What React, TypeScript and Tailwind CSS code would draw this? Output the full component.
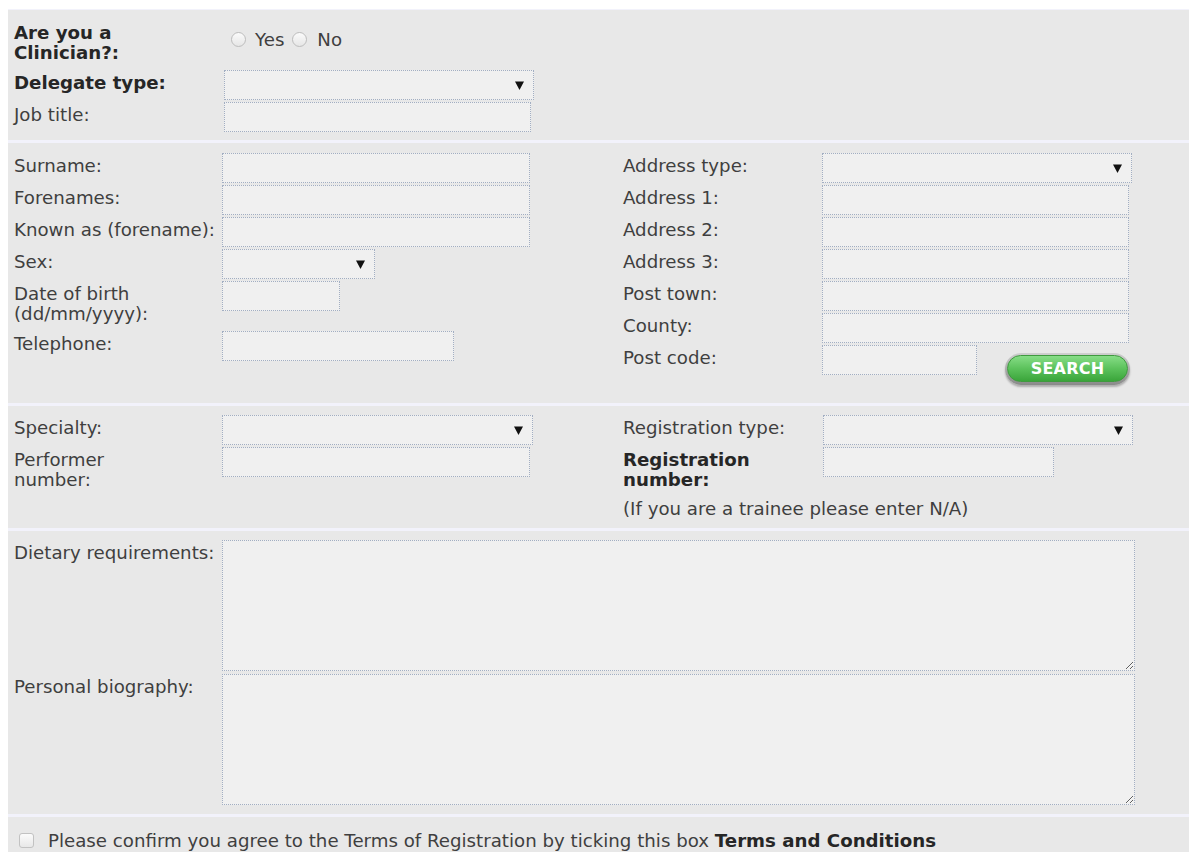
import React from 'react';

// shared look for the dotted form controls
const fieldBase =
  'h-[30px] bg-[#f0f0f0] border border-dotted border-[#a2aec2] outline-none px-1 text-[#333]';

function FieldLabel({
  children,
  bold,
  className = 'pt-[3px] pb-[5px]',
}: {
  children: React.ReactNode;
  bold?: boolean;
  className?: string;
}) {
  return (
    <div
      className={`leading-[20px] ${className} ${
        bold ? 'font-bold text-[#262626]' : 'text-[#3f3f3f]'
      }`}
    >
      {children}
    </div>
  );
}

function TextBox({ width }: { width: string }) {
  return <input type="text" className={`${fieldBase} ${width}`} />;
}

function DropDown({ width }: { width: string }) {
  return (
    <div className={`relative ${width}`}>
      <select className={`${fieldBase} w-full appearance-none`}>
        <option></option>
      </select>
      <svg
        className="pointer-events-none absolute right-[10px] top-[11px]"
        width="9"
        height="9"
        viewBox="0 0 9 9"
      >
        <path d="M0 0.5h9L4.5 9z" fill="#111" />
      </svg>
    </div>
  );
}

function RadioDot() {
  return (
    <span className="inline-block h-[15px] w-[15px] shrink-0 rounded-full border border-[#bdbdbd] bg-linear-to-b from-[#fbfbfb] to-[#e6e6e6]" />
  );
}

function SearchButton() {
  return (
    <button
      type="button"
      className="ml-[28px] mt-[8px] rounded-full bg-linear-to-b from-[#cfcfcf] to-[#8a8a8a] p-[2px] pb-[3px] shadow-[0_2px_2px_rgba(0,0,0,0.25)]"
    >
      <span className="flex h-[27px] w-[121px] items-center justify-center rounded-full border border-[#3f9a3f] bg-linear-to-b from-[#86dd86] via-[#5cc25c] to-[#3aa53a] text-[16px] font-bold tracking-[0.2px] text-white">
        SEARCH
      </span>
    </button>
  );
}

export default function App() {
  return (
    <div className="min-h-screen bg-white font-['DejaVu_Sans',sans-serif] text-[18.2px]">
      <div className="ml-[8px] mt-[9px] flex flex-col gap-[3px] bg-[#f2f2fb] pt-[1px]">
        {/* --- Clinician / delegate --- */}
        <section className="bg-[#e8e8e8] pb-[8px] pl-[6px] pt-[10px]">
          <div className="grid grid-cols-[210px_1fr] items-start gap-y-[2px]">
            <FieldLabel bold>
              Are you a
              <br />
              Clinician?:
            </FieldLabel>
            <div className="flex items-start pt-[7px] text-[#3f3f3f]">
              <span className="ml-[7px]">
                <RadioDot />
              </span>
              <span className="ml-[9px] mt-[3px] leading-[20px]">Yes</span>
              <span className="ml-[8px]">
                <RadioDot />
              </span>
              <span className="ml-[10px] mt-[3px] leading-[20px]">No</span>
            </div>
            <FieldLabel bold className="pt-[3px] pb-[1px]">
              Delegate type:
            </FieldLabel>
            <DropDown width="w-[310px]" />
            <FieldLabel>Job title:</FieldLabel>
            <TextBox width="w-[307px]" />
          </div>
        </section>

        {/* --- Name and address --- */}
        <section className="flex bg-[#e8e8e8] pb-[18px] pl-[6px] pt-[10px]">
          <div className="grid w-[609px] grid-cols-[208px_1fr] content-start items-start gap-y-[2px]">
            <FieldLabel>Surname:</FieldLabel>
            <TextBox width="w-[308px]" />
            <FieldLabel>Forenames:</FieldLabel>
            <TextBox width="w-[308px]" />
            <FieldLabel>Known as (forename):</FieldLabel>
            <TextBox width="w-[308px]" />
            <FieldLabel>Sex:</FieldLabel>
            <DropDown width="w-[153px]" />
            <FieldLabel>
              Date of birth
              <br />
              (dd/mm/yyyy):
            </FieldLabel>
            <TextBox width="w-[118px]" />
            <FieldLabel>Telephone:</FieldLabel>
            <TextBox width="w-[232px]" />
          </div>
          <div className="grid grid-cols-[199px_1fr] content-start items-start gap-y-[2px]">
            <FieldLabel>Address type:</FieldLabel>
            <DropDown width="w-[310px]" />
            <FieldLabel>Address 1:</FieldLabel>
            <TextBox width="w-[307px]" />
            <FieldLabel>Address 2:</FieldLabel>
            <TextBox width="w-[307px]" />
            <FieldLabel>Address 3:</FieldLabel>
            <TextBox width="w-[307px]" />
            <FieldLabel>Post town:</FieldLabel>
            <TextBox width="w-[307px]" />
            <FieldLabel>County:</FieldLabel>
            <TextBox width="w-[307px]" />
            <FieldLabel>Post code:</FieldLabel>
            <div className="flex items-start">
              <TextBox width="w-[155px]" />
              <SearchButton />
            </div>
          </div>
        </section>

        {/* --- Professional details --- */}
        <section className="flex bg-[#e8e8e8] pb-[9px] pl-[6px] pt-[9px]">
          <div className="grid w-[609px] grid-cols-[208px_1fr] content-start items-start gap-y-[2px]">
            <FieldLabel>Specialty:</FieldLabel>
            <DropDown width="w-[311px]" />
            <FieldLabel>
              Performer
              <br />
              number:
            </FieldLabel>
            <TextBox width="w-[308px]" />
          </div>
          <div className="grid grid-cols-[200px_1fr] content-start items-start gap-y-[2px]">
            <FieldLabel>Registration type:</FieldLabel>
            <DropDown width="w-[310px]" />
            <FieldLabel bold>
              Registration
              <br />
              number:
            </FieldLabel>
            <TextBox width="w-[231px]" />
            <div className="col-span-2 pt-[2px] leading-[20px] text-[#3f3f3f]">
              (If you are a trainee please enter N/A)
            </div>
          </div>
        </section>

        {/* --- Free text --- */}
        <section className="bg-[#e8e8e8] pb-[9px] pl-[6px] pt-[9px]">
          <div className="grid grid-cols-[208px_1fr] items-start gap-y-[3px]">
            <FieldLabel>Dietary requirements:</FieldLabel>
            <textarea className="h-[131px] w-[913px] border border-dotted border-[#a2aec2] bg-[#f0f0f0] outline-none" />
            <FieldLabel>Personal biography:</FieldLabel>
            <textarea className="h-[131px] w-[913px] border border-dotted border-[#a2aec2] bg-[#f0f0f0] outline-none" />
          </div>
        </section>

        {/* --- Terms --- */}
        <section className="flex h-[60px] items-start bg-[#e8e8e8] pl-[11px] pt-[14px]">
          <span className="mt-[2px] inline-block h-[15px] w-[15px] shrink-0 rounded-[3px] border border-[#c2c2c2] bg-linear-to-b from-[#fbfbfb] to-[#e8e8e8]" />
          <p className="ml-[14px] leading-[20px] text-[#3f3f3f]">
            Please confirm you agree to the Terms of Registration by ticking this box{' '}
            <b className="text-[#262626]">Terms and Conditions</b>
          </p>
        </section>
      </div>
    </div>
  );
}
